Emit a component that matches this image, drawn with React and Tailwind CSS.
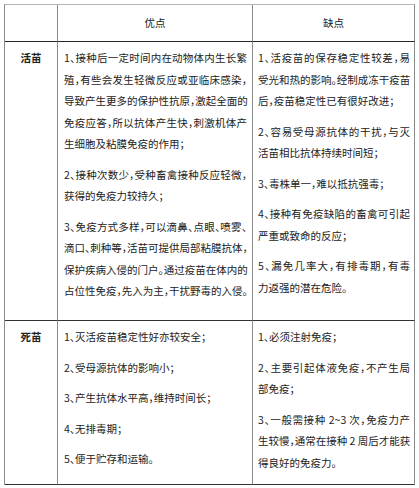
import React from 'react';

const rows = [
  {
    label: '活苗',
    height: 'h-[279px]',
    pros: [
      [
        '1、接种后一定时间内在动物体内生长繁',
        '殖，有些会发生轻微反应或亚临床感染，',
        '导致产生更多的保护性抗原，激起全面的',
        '免疫应答，所以抗体产生快，刺激机体产',
        '生细胞及粘膜免疫的作用；',
      ],
      ['2、接种次数少，受种畜禽接种反应轻微，', '获得的免疫力较持久；'],
      [
        '3、免疫方式多样，可以滴鼻、点眼、喷雾、',
        '滴口、刺种等，活苗可提供局部粘膜抗体，',
        '保护疾病入侵的门户。通过疫苗在体内的',
        '占位性免疫，先入为主，干扰野毒的入侵。',
      ],
    ],
    cons: [
      ['1、活疫苗的保存稳定性较差，易', '受光和热的影响。经制成冻干疫苗', '后，疫苗稳定性已有很好改进；'],
      ['2、容易受母源抗体的干扰，与灭', '活苗相比抗体持续时间短；'],
      ['3、毒株单一，难以抵抗强毒；'],
      ['4、接种有免疫缺陷的畜禽可引起', '严重或致命的反应；'],
      ['5、漏免几率大，有排毒期，有毒', '力返强的潜在危险。'],
    ],
  },
  {
    label: '死苗',
    height: 'h-[164px]',
    pros: [
      ['1、灭活疫苗稳定性好亦较安全；'],
      ['2、受母源抗体的影响小；'],
      ['3、产生抗体水平高，维持时间长；'],
      ['4、无排毒期；'],
      ['5、便于贮存和运输。'],
    ],
    cons: [
      ['1、必须注射免疫；'],
      ['2、主要引起体液免疫，不产生局', '部免疫；'],
      ['3、一般需接种 2~3 次，免疫力产', '生较慢，通常在接种 2 周后才能获', '得良好的免疫力。'],
    ],
  },
];

// each paragraph keeps the line breaks of the original; full lines are justified
function Paragraphs({ items }) {
  return (
    <div className="flex flex-col gap-[9px]">
      {items.map((lines, i) => (
        <div key={i}>
          {lines.map((line, j) => (
            <div
              key={j}
              className={
                j < lines.length - 1
                  ? 'whitespace-nowrap text-justify [text-align-last:justify]'
                  : 'whitespace-nowrap'
              }
            >
              {line}
            </div>
          ))}
        </div>
      ))}
    </div>
  );
}

export default function App() {
  return (
    <div className="min-h-[488px] w-[419px] bg-white pl-[4px] pt-[4px]">
      <div
        className="w-[411px] border-t border-l border-t-[#b5b5b5] border-l-[#8a8a8a] text-[10.5px] leading-[21.5px] text-[#222] [font-feature-settings:'halt']"
        style={{ fontFamily: '"Noto Sans CJK SC", "Noto Sans", sans-serif' }}
      >
        <div className="flex h-[37px]">
          <div className="w-[53px] border-r border-b border-r-[#8a8a8a] border-b-[#222]" />
          <div className="flex w-[195px] items-center justify-center border-r border-b border-r-[#8a8a8a] border-b-[#222]">
            优点
          </div>
          <div className="flex w-[162px] items-center justify-center border-r border-b border-r-[#8a8a8a] border-b-[#222]">
            缺点
          </div>
        </div>
        {rows.map((row) => (
          <div key={row.label} className={`flex ${row.height}`}>
            <div className="w-[53px] border-r border-b border-r-[#8a8a8a] border-b-[#333] pt-[5px] text-center font-bold">
              {row.label}
            </div>
            <div className="w-[195px] border-r border-b border-r-[#8a8a8a] border-b-[#333] pl-[6px] pr-[5px] pt-[5px]">
              <Paragraphs items={row.pros} />
            </div>
            <div className="w-[162px] border-r border-b border-r-[#8a8a8a] border-b-[#333] pl-[5px] pr-[4px] pt-[5px]">
              <Paragraphs items={row.cons} />
            </div>
          </div>
        ))}
      </div>
    </div>
  );
}
